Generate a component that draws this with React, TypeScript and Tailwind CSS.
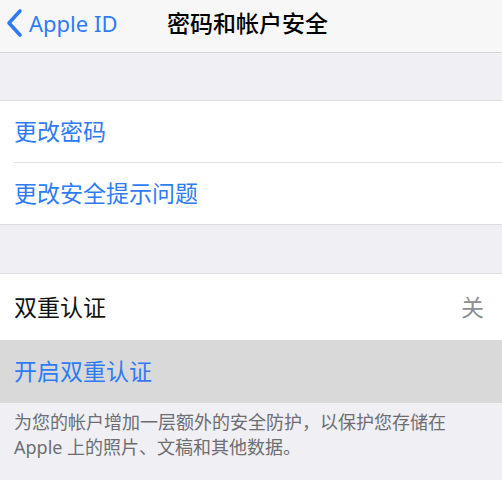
import React from 'react';

const font = { fontFamily: '"Noto Sans", "Noto Sans CJK SC", sans-serif' };

export default function App() {
  return (
    <div className="w-[502px] h-[480px] overflow-hidden bg-[#efeff4]" style={font}>
      <div className="relative h-[53px] bg-[#f7f7f8] border-b border-[#d6d6da] flex items-center pb-[6px]">
        <div className="flex items-center text-[#2f7bf5] pl-[5px]">
          <svg width="18" height="30" viewBox="0 0 18 30" fill="none">
            <path d="M15 3 L4 15 L15 27" stroke="#2f7bf5" strokeWidth="3.6" strokeLinecap="round" strokeLinejoin="round" />
          </svg>
          <span className="ml-[6px] text-[22px] leading-none">Apple ID</span>
        </div>
        <div className="absolute left-[167px] top-0 h-full flex items-center pb-[6px] text-[23px] font-medium text-black leading-none">
          密码和帐户安全
        </div>
      </div>
      <div className="h-[48px] border-b border-[#dcdce0]" />
      <div className="bg-white">
        <div className="h-[62px] flex items-center pl-[14px]">
          <div className="h-full flex-1 flex items-center border-b border-[#e2e2e6] text-[23px] text-[#2f7bf5]">更改密码</div>
        </div>
        <div className="h-[62px] flex items-center pl-[14px] border-b border-[#dcdce0] text-[23px] text-[#2f7bf5]">
          更改安全提示问题
        </div>
      </div>
      <div className="h-[49px] border-b border-[#dcdce0]" />
      <div className="h-[66px] bg-white flex items-center justify-between pl-[14px] pr-[18px] text-[23px]">
        <span className="text-[#111]">双重认证</span>
        <span className="text-[#8e8e93]">关</span>
      </div>
      <div className="h-[63px] bg-[#d9d9d9] flex items-center pl-[14px] text-[23px] text-[#2f7bf5]">开启双重认证</div>
      <div className="pt-[7px] pl-[14px] pr-[30px] text-[18px] leading-[25px] text-[#6d6d72]">
        为您的帐户增加一层额外的安全防护，以保护您存储在
        <br />
        Apple 上的照片、文稿和其他数据。
      </div>
    </div>
  );
}
